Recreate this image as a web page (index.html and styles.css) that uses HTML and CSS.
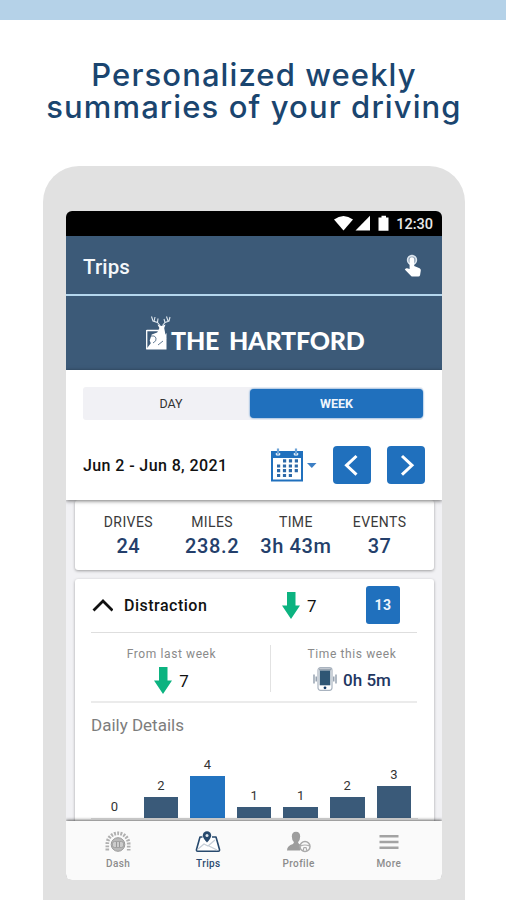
FILE: index.html
```html
<!DOCTYPE html>
<html lang="en">

<head>
    <meta charset="UTF-8">
    <meta name="viewport" content="width=device-width, initial-scale=1.0">
    <title>Trips</title>
    <link rel="stylesheet" href="styles.css">
</head>

<body>
    <div class="band"></div>
    <h1 class="headline">Personalized weekly<br>summaries of your driving</h1>

    <div class="phone">
        <div class="screen">
            <!-- status bar -->
            <div class="status">
                <svg width="56" height="17" viewBox="0 0 56 17" fill="#fff">
                    <path d="M0 4.5Q9.5-2.5 19 4.5L9.5 15.5z" />
                    <path d="M21.5 15.5H36V.8z" />
                    <path d="M44.5 2.5h3V.7h4.500v1.800h2.500v13.200h-10z" />
                </svg>
                <span class="clock">12:30</span>
            </div>

            <div class="appbar">
                <span class="title">Trips</span>
                <svg width="18" height="24" viewBox="0 0 18 24">
                    <circle cx="8" cy="6" r="4.400" fill="#8fa2b6" stroke="#dce5ee" stroke-width="1.600" />
                    <path fill="#fff" d="M5.600 5.500a2.300 2.300 0 0 1 4.600 0V12l5.400 2.300q1.400.7 1.200 2.200l-.7 4.500q-.3 1.500-1.800 1.500H8.500q-.8 0-1.400-.6L.8 15.600l1-1q.5-.5 1.300-.3l2.500.8z" />
                </svg>
            </div>

            <div class="brand">
                <svg width="27" height="36" viewBox="0 0 27 36">
                    <path fill="none" stroke="#fff" stroke-width="1.300" d="M1.700 15.500h12M1.700 15v19" />
                    <path fill="#fff" d="M1 34.500 6 28h8l7.500-10v16.500z" />
                    <path fill="#fff" d="M12.500 9.500l4 1.500 4-1.500-1.300 3.500 2 10.500-2.500 6-5.500 3-6.500-2-2-5 2-6 5.500-2 2.200-4.500z" />
                    <path fill="none" stroke="#dfe8f0" stroke-width="1.100" d="M15 10.500 12.500 7.500 8 6 6.500 1.500M9 6.500 10 2M12.500 7.500 13 3.500M17.500 10.500 20 7.500 24 6 25 2M23 6 21.500 1.500M20 7.500 19 4" />
                    <path fill="none" stroke="#3c5a78" stroke-width=".8" d="M6 21q4-1 5 2t-3 5M13 30l5-4" />
                </svg>
                <span class="name">THE HARTFORD</span>
            </div>

            <div class="controls">
                <div class="toggle">
                    <span class="option">DAY</span>
                    <span class="option active">WEEK</span>
                </div>
                <div class="range">
                    <span class="dates">Jun 2 - Jun 8, 2021</span>
                    <svg width="46" height="34" viewBox="0 0 46 34">
                        <path fill="#2070bd" fill-rule="evenodd" d="M0 3h32v30.500H0zM2 10v21.500h28V10z" />
                        <path stroke="#6fa3d6" stroke-width="2.200" d="M7 .5v6M25 .5v6" />
                        <path stroke="#fff" stroke-width="1" d="M5.300 5v2h3.400V5M23.300 5v2h3.400V5" fill="none" />
                        <path stroke="#2c69a8" stroke-width="3.200" stroke-dasharray="3.200 2.700" d="M12 12.800h15M6 18h21M6 22.700h21M6 27.500h15" />
                        <path fill="#3d7fc4" d="M36 15h9.500l-4.700 5z" />
                    </svg>
                    <button class="step" aria-label="Previous week">
                        <svg width="38" height="38" viewBox="0 0 38 38" fill="none" stroke="#fff" stroke-width="3"><path d="M23.500 10 13.500 19.300l10 9.300" /></svg>
                    </button>
                    <button class="step" aria-label="Next week">
                        <svg width="38" height="38" viewBox="0 0 38 38" fill="none" stroke="#fff" stroke-width="3"><path d="M15 10l10 9.300-10 9.300" /></svg>
                    </button>
                </div>
            </div>

            <div class="content">
                <div class="card stats">
                    <div class="stat"><span class="label">DRIVES</span><span class="value">24</span></div>
                    <div class="stat"><span class="label">MILES</span><span class="value">238.2</span></div>
                    <div class="stat"><span class="label">TIME</span><span class="value">3h 43m</span></div>
                    <div class="stat"><span class="label">EVENTS</span><span class="value">37</span></div>
                </div>

                <div class="card details">
                    <div class="summary">
                        <svg width="22" height="14" viewBox="0 0 22 14" fill="none" stroke="#111" stroke-width="2.800"><path d="M2.500 12.500 12 3l9.500 9.500" /></svg>
                        <span class="category">Distraction</span>
                        <svg width="18" height="27" viewBox="0 0 18 27"><path fill="#0cb380" d="M5 0h8.500v13.500H18L9 27 0 13.500h5z" /></svg>
                        <span class="change">7</span>
                        <span class="count">13</span>
                    </div>

                    <div class="compare">
                        <div class="half">
                            <span class="caption">From last week</span>
                            <div class="reading">
                                <svg width="18" height="27" viewBox="0 0 18 27"><path fill="#0cb380" d="M5 0h8.500v13.500H18L9 27 0 13.500h5z" /></svg>
                                <span class="diff">7</span>
                            </div>
                        </div>
                        <div class="half second">
                            <span class="caption">Time this week</span>
                            <div class="reading">
                                <svg width="24" height="24" viewBox="0 0 24 24">
                                    <rect x="5" y=".7" width="14" height="22.600" rx="2.500" fill="#fff" stroke="#a9b3bf" stroke-width="1.200" />
                                    <path fill="#9aa5b1" d="M6 1.500h12v2H6z" />
                                    <path fill="#2f5674" d="M6.700 3.500h10.600v14.800H6.700z" />
                                    <circle cx="12" cy="20.800" r="1.400" fill="#123a66" />
                                    <path fill="none" stroke="#8795a5" stroke-width="1.300" d="M1 7.500v9M3.200 9.500v5M23 7.500v9M20.800 9.500v5" />
                                </svg>
                                <span class="time">0h 5m</span>
                            </div>
                        </div>
                    </div>

                    <h2 class="subtitle">Daily Details</h2>
                    <div class="chart">
                        <div class="day"><span>0</span><div class="bar" style="height:0"></div></div>
                        <div class="day"><span>2</span><div class="bar" style="height:21px"></div></div>
                        <div class="day"><span>4</span><div class="bar today" style="height:42px"></div></div>
                        <div class="day"><span>1</span><div class="bar" style="height:10.5px"></div></div>
                        <div class="day"><span>1</span><div class="bar" style="height:10.5px"></div></div>
                        <div class="day"><span>2</span><div class="bar" style="height:21px"></div></div>
                        <div class="day"><span>3</span><div class="bar" style="height:31.5px"></div></div>
                    </div>
                </div>
            </div>

            <nav class="tabs">
                <div class="tab">
                    <svg width="26" height="22" viewBox="0 0 26 22">
                        <path fill="none" stroke="#b0b0b0" stroke-width="3.600" stroke-dasharray="1.900 1.300" d="M2.300 19.500V13a10.700 10.700 0 0 1 21.400 0v6.500" />
                        <circle cx="13" cy="13.500" r="6.800" fill="#b9b9b9" stroke="#999" />
                        <rect x="7.500" y="10.500" width="11" height="6" rx="2" fill="#ccc" stroke="#999" stroke-width=".8" />
                        <path stroke="#999" d="M11.500 11v5M14.500 11v5" />
                    </svg>
                    <span>Dash</span>
                </div>
                <div class="tab selected">
                    <svg width="26" height="22" viewBox="0 0 26 22">
                        <path fill="#fff" stroke="#27496d" stroke-width="1.600" stroke-linejoin="round" d="M7.500 6H5L1.500 18.500q-.3 1.800 1.200 1.800h20.600q1.500 0 1.200-1.800L21 6h-4" />
                        <path fill="none" stroke="#c6ced7" stroke-width="1.300" d="M3 18l6-5 4 2 7-6M14 15l8 4" />
                        <path fill="#27496d" d="M12 11.500Q7.800 7 7.800 4.500a4.200 4.200 0 0 1 8.400 0Q16.200 7 12 11.500z" />
                        <circle cx="12" cy="4.400" r="1.500" fill="#dfe7ee" />
                    </svg>
                    <span>Trips</span>
                </div>
                <div class="tab">
                    <svg width="26" height="22" viewBox="0 0 26 22">
                        <path fill="#9d9d9d" d="M1 19.500q0-5 6-6.500l1-1.700Q5.800 9 5.800 5.500 5.800.8 10 .8t4.200 4.700q0 3.500-2.200 5.800l1 1.700 2.500.8-1.500 5.700z" />
                        <circle cx="19" cy="15.500" r="5" fill="#fafafa" stroke="#aaa" stroke-width="1.500" />
                        <path fill="none" stroke="#aaa" stroke-width="1.200" d="M14.500 15q4.500-2 9 0M17 20l1-3.500h2l1 3.500" />
                    </svg>
                    <span>Profile</span>
                </div>
                <div class="tab">
                    <svg width="26" height="22" viewBox="0 0 26 22"><path stroke="#a3a3a3" stroke-width="2.600" d="M3.500 5.300h19M3.500 11h19M3.500 16.700h19" /></svg>
                    <span>More</span>
                </div>
            </nav>
        </div>
    </div>
</body>

</html>
```

FILE: styles.css
```css
* {
    box-sizing: border-box;
}

body {
    margin: 0;
    background: #fff;
    font-family: Roboto, "Liberation Sans", sans-serif;
    color: #111;
}

svg {
    display: block;
    flex: none;
}

.band {
    height: 19.5px;
    background: #b5d2e8;
}

.headline {
    margin: 0;
    padding: 39px 0 0 2px;
    height: 146px;
    font: 500 31px/32px Inter, "Open Sans", sans-serif;
    letter-spacing: 1.1px;
    text-align: center;
    white-space: nowrap;
    color: #1a456f;
}

.phone {
    width: 422px;
    height: 734.5px;
    margin-left: 43px;
    padding: 45.5px 23px 0;
    background: #e1e1e1;
    border-radius: 36px 36px 0 0;
}

.screen {
    width: 376px;
    height: 669px;
    display: flex;
    flex-direction: column;
    border-radius: 6px;
    overflow: hidden;
    background: #f1f1f4;
}

.status {
    height: 25px;
    display: flex;
    align-items: center;
    justify-content: flex-end;
    padding-right: 9px;
    background: #000;
}

.clock {
    margin-left: 6px;
    padding-top: 1px;
    font-size: 14.5px;
    font-weight: 500;
    color: #e8e8e8;
}

.appbar {
    height: 60px;
    display: flex;
    align-items: center;
    justify-content: space-between;
    padding: 2px 20px 0 17px;
    background: #3c5a78;
    border-bottom: 2px solid #b5d7ee;
}

.title {
    font-size: 20.5px;
    font-weight: 500;
    letter-spacing: .15px;
    color: #f5f8fb;
    padding-top: 1px;
}

.brand {
    height: 74px;
    display: flex;
    align-items: flex-start;
    padding: 19px 0 0 79px;
    background: #3c5a78;
}

.name {
    padding-top: 10px;
    margin-left: -1px;
    font: 900 25px/30px Lato, sans-serif;
    letter-spacing: -.2px;
    word-spacing: 4px;
    white-space: nowrap;
    color: #fff;
}

.controls {
    position: relative;
    height: 129.5px;
    padding: 17px 17px 0;
    background: #fff;
    box-shadow: 0 1px 4px rgba(0, 0, 0, .55);
}

.toggle {
    display: flex;
    align-items: center;
    width: 340px;
    height: 33px;
    background: #f1f1f5;
    border-radius: 3px;
}

.option {
    flex: 1 0 0;
    text-align: center;
    font-size: 12.5px;
    line-height: 29px;
    color: #333;
    padding-left: 9px;
}

.option.active {
    flex: 0 0 173px;
    padding: 0;
    font-weight: 700;
    color: #eef5fc;
    background: #2070bd;
    border-radius: 4px;
    box-shadow: 0 0 2px #2070bd;
}

.range {
    display: flex;
    align-items: center;
    margin-top: 25.5px;
}

.dates {
    width: 188px;
    padding-top: 2px;
    font-size: 16px;
    font-weight: 500;
    letter-spacing: .4px;
    white-space: nowrap;
}

.step {
    width: 38px;
    height: 38px;
    margin-left: 16px;
    padding: 0;
    border: 0;
    border-radius: 4px;
    background: #2070bd;
}

.content {
    flex: 1;
    overflow: hidden;
    padding: 0 8.5px;
}

.card {
    background: #fff;
    border-radius: 3px;
    box-shadow: 0 1px 3px rgba(0, 0, 0, .35);
}

.stats {
    height: 70px;
    display: flex;
    padding: 13px 12px 0;
}

.stat {
    flex: 1 0 0;
    display: flex;
    flex-direction: column;
    align-items: center;
    white-space: nowrap;
}

.stat .label {
    font-size: 14px;
    line-height: 19px;
    letter-spacing: .4px;
    color: #3a3a3a;
}

.stat .value {
    margin-top: 1px;
    font-size: 20px;
    line-height: 26px;
    font-weight: 500;
    letter-spacing: .6px;
    color: #243f6b;
}

.details {
    height: 260px;
    margin-top: 9px;
    padding: 0 16.5px;
}

.summary {
    height: 54px;
    display: flex;
    align-items: center;
    border-bottom: 1.5px solid #dedede;
}

.summary .category {
    width: 158px;
    margin-left: 11px;
    padding-top: 1px;
    font-size: 16px;
    font-weight: 500;
    letter-spacing: .5px;
}

.summary .change {
    width: 59px;
    margin-left: 7px;
    padding-top: 1px;
    font-size: 17px;
}

.count {
    width: 34px;
    height: 38px;
    border-radius: 3px;
    background: #2070bd;
    color: #eef5fc;
    font-size: 14px;
    font-weight: 700;
    line-height: 39px;
    letter-spacing: .5px;
    text-align: center;
}

.compare {
    height: 70px;
    display: flex;
    padding-top: 12px;
    border-bottom: 2px solid #ebebeb;
}

.half {
    flex: none;
    width: 180px;
    height: 47px;
    display: flex;
    flex-direction: column;
    align-items: center;
    padding-right: 18px;
    border-right: 1.5px solid #e2e2e2;
}

.half.second {
    width: 162px;
    padding: 0;
    border: 0;
}

.caption {
    font-size: 12px;
    line-height: 18px;
    letter-spacing: .6px;
    white-space: nowrap;
    color: #8a8a8a;
}

.reading {
    display: flex;
    align-items: center;
    height: 27px;
    margin-top: 4px;
}

.diff {
    margin-left: 7px;
    padding-top: 1px;
    font-size: 17px;
}

.time {
    margin-left: 6px;
    padding-top: 2px;
    font-size: 17px;
    font-weight: 500;
    color: #1f3762;
}

.subtitle {
    margin: 11px 0 0;
    font-size: 17px;
    line-height: 22px;
    font-weight: 400;
    color: #7d7d7d;
}

.chart {
    display: flex;
    height: 83px;
    width: 327px;
    border-bottom: 1px solid #ddd;
}

.day {
    flex: 0 0 46.6px;
    display: flex;
    flex-direction: column;
    align-items: center;
    justify-content: flex-end;
    font-size: 13px;
    line-height: 22px;
    color: #333;
}

.bar {
    width: 34.5px;
    background: #3a5a79;
}

.bar.today {
    background: #2273c0;
}

.tabs {
    position: relative;
    height: 59px;
    display: flex;
    padding: 10px 8px 0 7px;
    background: #fafafa;
    box-shadow: 0 -1px 3px rgba(0, 0, 0, .6);
}

.tab {
    flex: 1 0 0;
    display: flex;
    flex-direction: column;
    align-items: center;
    font-size: 10px;
    line-height: 12px;
    font-weight: 500;
    letter-spacing: .4px;
    color: #8c8c8c;
}

.tab span {
    margin-top: 5px;
}

.tab.selected {
    color: #2b4a70;
}
```
